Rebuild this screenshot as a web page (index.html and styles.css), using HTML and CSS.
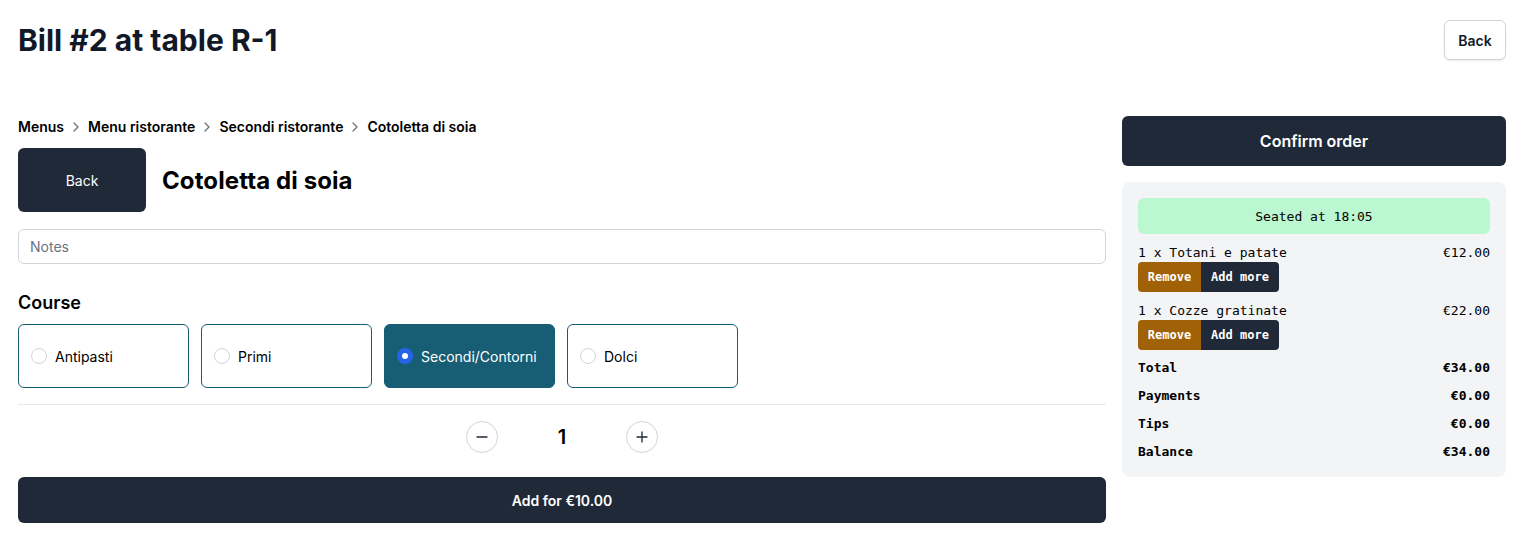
FILE: index.html
```html
<!DOCTYPE html>
<html lang="en">
<head>
<meta charset="utf-8">
<title>Bill #2 at table R-1</title>
<link rel="stylesheet" href="styles.css">
</head>
<body>
<div class="page">
  <header class="header">
    <h1 class="title">Bill #2 at table R-1</h1>
    <button class="btn-outline">Back</button>
  </header>
  <main class="main">
    <section class="left">
      <nav class="crumbs">
        <span>Menus</span>
        <svg class="chev" viewBox="0 0 16 16"><path d="M6 4l4 4-4 4" fill="none" stroke="#6b7280" stroke-width="1.3" stroke-linecap="round" stroke-linejoin="round"/></svg>
        <span>Menu ristorante</span>
        <svg class="chev" viewBox="0 0 16 16"><path d="M6 4l4 4-4 4" fill="none" stroke="#6b7280" stroke-width="1.3" stroke-linecap="round" stroke-linejoin="round"/></svg>
        <span>Secondi ristorante</span>
        <svg class="chev" viewBox="0 0 16 16"><path d="M6 4l4 4-4 4" fill="none" stroke="#6b7280" stroke-width="1.3" stroke-linecap="round" stroke-linejoin="round"/></svg>
        <span>Cotoletta di soia</span>
      </nav>
      <div class="item-head">
        <button class="btn-dark back-big">Back</button>
        <h2 class="item-title">Cotoletta di soia</h2>
      </div>
      <input class="notes" type="text" placeholder="Notes">
      <h3 class="course-label">Course</h3>
      <div class="courses">
        <label class="course"><span class="radio"></span>Antipasti</label>
        <label class="course"><span class="radio"></span>Primi</label>
        <label class="course selected"><span class="radio checked"></span>Secondi/Contorni</label>
        <label class="course"><span class="radio"></span>Dolci</label>
      </div>
      <div class="qty">
        <button class="circle"><svg viewBox="0 0 16 16"><path d="M3 8h10" stroke="#1f2937" stroke-width="1.3" stroke-linecap="round"/></svg></button>
        <span class="qty-num">1</span>
        <button class="circle"><svg viewBox="0 0 16 16"><path d="M3 8h10M8 3v10" stroke="#1f2937" stroke-width="1.3" stroke-linecap="round"/></svg></button>
      </div>
      <button class="btn-dark add">Add for €10.00</button>
    </section>
    <aside class="right">
      <button class="btn-dark confirm">Confirm order</button>
      <div class="panel">
        <div class="seated">Seated at 18:05</div>
        <div class="line">
          <div class="line-row"><span>1 x Totani e patate</span><span>€12.00</span></div>
          <div class="line-btns"><button class="btn-remove">Remove</button><button class="btn-more">Add more</button></div>
        </div>
        <div class="line">
          <div class="line-row"><span>1 x Cozze gratinate</span><span>€22.00</span></div>
          <div class="line-btns"><button class="btn-remove">Remove</button><button class="btn-more">Add more</button></div>
        </div>
        <div class="sum"><span>Total</span><span>€34.00</span></div>
        <div class="sum"><span>Payments</span><span>€0.00</span></div>
        <div class="sum"><span>Tips</span><span>€0.00</span></div>
        <div class="sum"><span>Balance</span><span>€34.00</span></div>
      </div>
    </aside>
  </main>
</div>
</body>
</html>
```
FILE: styles.css
```css
* { box-sizing: border-box; }
body {
  margin: 0;
  font-family: Inter, "Liberation Sans", sans-serif;
  color: #000;
  background: #fff;
}
button { font-family: inherit; cursor: pointer; }
.page { padding: 20px 19px 18px 18px; }
.header {
  display: flex;
  justify-content: space-between;
  align-items: center;
  height: 40px;
}
.title {
  margin: 0;
  font-size: 30px;
  font-weight: 700;
  color: #111827;
}
.btn-outline {
  height: 40px;
  width: 62px;
  border: 1px solid #d1d5db;
  border-radius: 6px;
  background: #fff;
  font-size: 14px;
  font-weight: 600;
  color: #111827;
  box-shadow: 0 1px 2px rgba(0,0,0,0.08);
}
.main {
  margin-top: 56px;
  display: flex;
  gap: 16px;
  align-items: flex-start;
}
.left { flex: 1; display: flex; flex-direction: column; }
.right { width: 384px; flex: none; display: flex; flex-direction: column; gap: 16px; }
.crumbs {
  display: flex;
  align-items: center;
  font-size: 14px;
  font-weight: 600;
  line-height: 20px;
  margin-top: 1px;
}
.chev { width: 16px; height: 16px; margin: 0 4px; }
.item-head {
  display: flex;
  align-items: center;
  gap: 16px;
  margin-top: 11px;
}
.btn-dark {
  background: #1f2937;
  color: #fff;
  border: none;
  border-radius: 6px;
}
.back-big {
  width: 128px;
  height: 64px;
  font-size: 14px;
  font-weight: 400;
}
.item-title { margin: 0; font-size: 24px; font-weight: 700; letter-spacing: 0.1px; }
.notes {
  margin-top: 17px;
  height: 35px;
  border: 1px solid #d1d5db;
  border-radius: 6px;
  padding: 0 11px;
  font-family: inherit;
  font-size: 14px;
}
.notes::placeholder { color: #6b7280; }
.course-label {
  margin: 25px 0 0;
  font-size: 18px;
  font-weight: 600;
  line-height: 28px;
}
.courses {
  display: flex;
  gap: 12px;
  margin-top: 7px;
  padding-bottom: 16px;
  border-bottom: 1px solid #e5e7eb;
}
.course {
  width: 171px;
  height: 64px;
  border: 1px solid #175e74;
  border-radius: 6px;
  display: flex;
  align-items: center;
  gap: 8px;
  padding-left: 12px;
  font-size: 14px;
  color: #000;
}
.course.selected { background: #175e74; color: #fff; }
.radio {
  width: 16px;
  height: 16px;
  border-radius: 50%;
  border: 1px solid #d1d5db;
  background: #fff;
  flex: none;
}
.radio.checked {
  border: 5px solid #2563eb;
  background: #fff;
}
.qty {
  display: flex;
  justify-content: center;
  align-items: center;
  gap: 32px;
  margin-top: 16px;
}
.circle {
  width: 32px;
  height: 32px;
  border-radius: 50%;
  border: 1px solid #d1d5db;
  background: #fff;
  display: flex;
  align-items: center;
  justify-content: center;
  padding: 0;
}
.circle svg { width: 16px; height: 16px; }
.qty-num { width: 64px; text-align: center; font-size: 20px; font-weight: 600; }
.add {
  margin-top: 24px;
  height: 46px;
  font-size: 14px;
  font-weight: 600;
}
.confirm {
  height: 50px;
  font-size: 16px;
  font-weight: 600;
}
.panel {
  background: #f3f4f6;
  border-radius: 8px;
  padding: 16px 16px 15px;
  display: flex;
  flex-direction: column;
  gap: 8px;
  font-family: "DejaVu Sans Mono", "Liberation Mono", monospace;
  font-size: 13px;
  color: #000;
}
.seated {
  height: 36px;
  background: #bbf7d0;
  border-radius: 6px;
  display: flex;
  align-items: center;
  justify-content: center;
}
.line-row, .sum {
  display: flex;
  justify-content: space-between;
  line-height: 20px;
}
.line-row { padding-top: 1px; line-height: 19px; }
.sum { font-weight: 700; }
.line-btns { display: flex; }
.line-btns button {
  height: 30px;
  border: none;
  color: #fff;
  font-family: "DejaVu Sans Mono", "Liberation Mono", monospace;
  font-size: 12px;
  font-weight: 700;
  padding: 0;
}
.btn-remove { background: #a16207; border-radius: 4px 0 0 4px; width: 63px; }
.btn-more { background: #1f2937; border-radius: 0 4px 4px 0; width: 78px; }
```
